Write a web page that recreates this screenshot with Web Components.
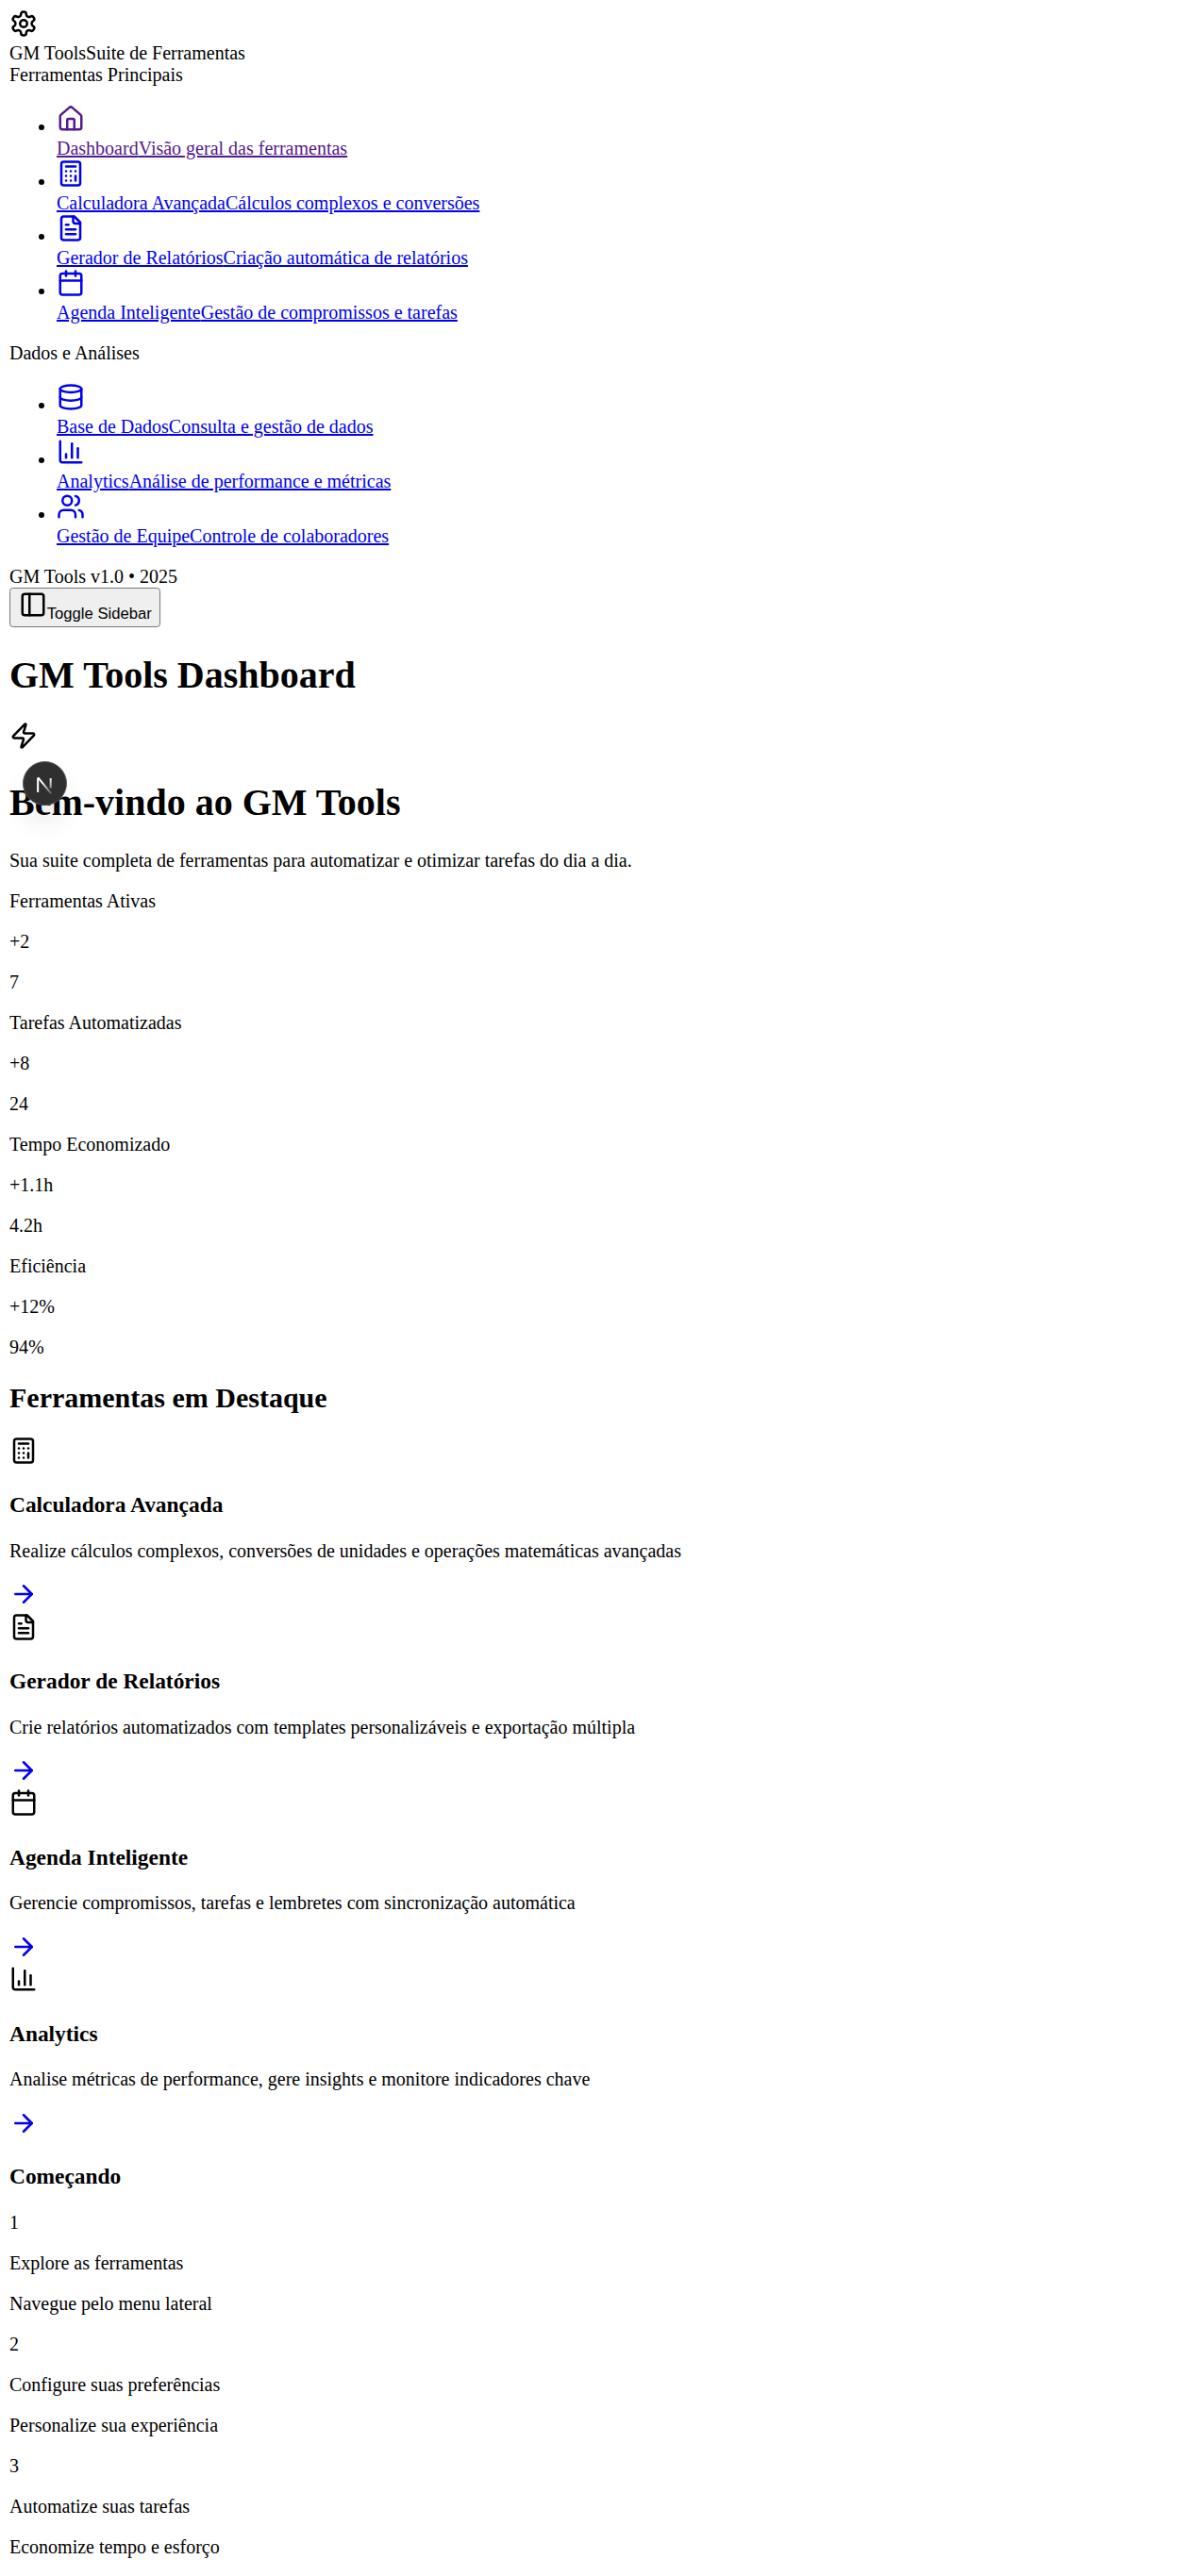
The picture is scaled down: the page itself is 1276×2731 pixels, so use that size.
<!DOCTYPE html>
<html lang="pt-BR">
<head>
<meta charset="utf-8">
<title>GM Tools</title>
<style>
  body {
    margin: 10px;
    font-family: "Liberation Serif", "Times New Roman", serif;
    font-size: 20px;
    color: #000;
    background: #fff;
  }
</style>
</head>
<body>
  <gm-sidebar>
    <gm-nav-group label="Ferramentas Principais">
      <gm-nav-item icon="house" current><span slot="title">Dashboard</span><span slot="sub">Visão geral das ferramentas</span></gm-nav-item>
      <gm-nav-item icon="calculator"><span slot="title">Calculadora Avançada</span><span slot="sub">Cálculos complexos e conversões</span></gm-nav-item>
      <gm-nav-item icon="file-text"><span slot="title">Gerador de Relatórios</span><span slot="sub">Criação automática de relatórios</span></gm-nav-item>
      <gm-nav-item icon="calendar"><span slot="title">Agenda Inteligente</span><span slot="sub">Gestão de compromissos e tarefas</span></gm-nav-item>
    </gm-nav-group>
    <gm-nav-group label="Dados e Análises">
      <gm-nav-item icon="database"><span slot="title">Base de Dados</span><span slot="sub">Consulta e gestão de dados</span></gm-nav-item>
      <gm-nav-item icon="chart"><span slot="title">Analytics</span><span slot="sub">Análise de performance e métricas</span></gm-nav-item>
      <gm-nav-item icon="users"><span slot="title">Gestão de Equipe</span><span slot="sub">Controle de colaboradores</span></gm-nav-item>
    </gm-nav-group>
  </gm-sidebar>

  <gm-topbar>GM Tools Dashboard</gm-topbar>

  <gm-dashboard>
    <gm-stat label="Ferramentas Ativas" trend="+2" value="7"></gm-stat>
    <gm-stat label="Tarefas Automatizadas" trend="+8" value="24"></gm-stat>
    <gm-stat label="Tempo Economizado" trend="+1.1h" value="4.2h"></gm-stat>
    <gm-stat label="Eficiência" trend="+12%" value="94%"></gm-stat>

    <gm-tool-card slot="tools" icon="calculator" heading="Calculadora Avançada">Realize cálculos complexos, conversões de unidades e operações matemáticas avançadas</gm-tool-card>
    <gm-tool-card slot="tools" icon="file-text" heading="Gerador de Relatórios">Crie relatórios automatizados com templates personalizáveis e exportação múltipla</gm-tool-card>
    <gm-tool-card slot="tools" icon="calendar" heading="Agenda Inteligente">Gerencie compromissos, tarefas e lembretes com sincronização automática</gm-tool-card>
    <gm-tool-card slot="tools" icon="chart" heading="Analytics">Analise métricas de performance, gere insights e monitore indicadores chave</gm-tool-card>

    <gm-step slot="steps" n="1" heading="Explore as ferramentas">Navegue pelo menu lateral</gm-step>
    <gm-step slot="steps" n="2" heading="Configure suas preferências">Personalize sua experiência</gm-step>
    <gm-step slot="steps" n="3" heading="Automatize suas tarefas">Economize tempo e esforço</gm-step>
  </gm-dashboard>

  <gm-dev-badge></gm-dev-badge>

<script>
// Icon outlines, 24x24 viewBox
const ICONS = {
  settings: '<path d="M12.22 2h-.44a2 2 0 0 0-2 2v.18a2 2 0 0 1-1 1.73l-.43.25a2 2 0 0 1-2 0l-.15-.08a2 2 0 0 0-2.73.73l-.22.38a2 2 0 0 0 .73 2.73l.15.1a2 2 0 0 1 1 1.72v.51a2 2 0 0 1-1 1.74l-.15.09a2 2 0 0 0-.73 2.73l.22.38a2 2 0 0 0 2.73.73l.15-.08a2 2 0 0 1 2 0l.43.25a2 2 0 0 1 1 1.73V20a2 2 0 0 0 2 2h.44a2 2 0 0 0 2-2v-.18a2 2 0 0 1 1-1.73l.43-.25a2 2 0 0 1 2 0l.15.08a2 2 0 0 0 2.73-.73l.22-.39a2 2 0 0 0-.73-2.73l-.15-.08a2 2 0 0 1-1-1.74v-.5a2 2 0 0 1 1-1.74l.15-.09a2 2 0 0 0 .73-2.73l-.22-.38a2 2 0 0 0-2.73-.73l-.15.08a2 2 0 0 1-2 0l-.43-.25a2 2 0 0 1-1-1.73V4a2 2 0 0 0-2-2z"/><circle cx="12" cy="12" r="3"/>',
  house: '<path d="M15 21v-8a1 1 0 0 0-1-1h-4a1 1 0 0 0-1 1v8"/><path d="M3 10a2 2 0 0 1 .709-1.528l7-5.999a2 2 0 0 1 2.582 0l7 5.999A2 2 0 0 1 21 10v9a2 2 0 0 1-2 2H5a2 2 0 0 1-2-2z"/>',
  calculator: '<rect width="16" height="20" x="4" y="2" rx="2"/><line x1="8" x2="16" y1="6" y2="6"/><line x1="16" x2="16" y1="14" y2="18"/><path d="M16 10h.01"/><path d="M12 10h.01"/><path d="M8 10h.01"/><path d="M12 14h.01"/><path d="M8 14h.01"/><path d="M12 18h.01"/><path d="M8 18h.01"/>',
  'file-text': '<path d="M15 2H6a2 2 0 0 0-2 2v16a2 2 0 0 0 2 2h12a2 2 0 0 0 2-2V7Z"/><path d="M14 2v4a2 2 0 0 0 2 2h4"/><path d="M10 9H8"/><path d="M16 13H8"/><path d="M16 17H8"/>',
  calendar: '<path d="M8 2v4"/><path d="M16 2v4"/><rect width="18" height="18" x="3" y="4" rx="2"/><path d="M3 10h18"/>',
  database: '<ellipse cx="12" cy="5" rx="9" ry="3"/><path d="M3 5V19A9 3 0 0 0 21 19V5"/><path d="M3 12A9 3 0 0 0 21 12"/>',
  chart: '<path d="M3 3v16a2 2 0 0 0 2 2h16"/><path d="M18 17V9"/><path d="M13 17V5"/><path d="M8 17v-3"/>',
  users: '<path d="M16 21v-2a4 4 0 0 0-4-4H6a4 4 0 0 0-4 4v2"/><circle cx="9" cy="7" r="4"/><path d="M22 21v-2a4 4 0 0 0-3-3.87"/><path d="M16 3.13a4 4 0 0 1 0 7.75"/>',
  'panel-left': '<rect width="18" height="18" x="3" y="3" rx="2"/><path d="M9 3v18"/>',
  zap: '<path d="M4 14a1 1 0 0 1-.78-1.63l9.9-10.2a.5.5 0 0 1 .86.46l-1.92 6.02A1 1 0 0 0 13 10h7a1 1 0 0 1 .78 1.63l-9.9 10.2a.5.5 0 0 1-.86-.46l1.92-6.02A1 1 0 0 0 11 14z"/>',
  'arrow-right': '<path d="M5 12h14"/><path d="m12 5 7 7-7 7"/>'
};

function icon(name) {
  return `<svg xmlns="http://www.w3.org/2000/svg" width="30" height="30" viewBox="0 0 24 24" fill="none" stroke="currentColor" stroke-width="2" stroke-linecap="round" stroke-linejoin="round">${ICONS[name]}</svg>`;
}

// Small helper so each element stays a class with its own shadow root
class GmElement extends HTMLElement {
  constructor() {
    super();
    this.attachShadow({ mode: 'open' });
  }

  connectedCallback() {
    this.shadowRoot.innerHTML = this.render();
  }
}

class GmSidebar extends GmElement {
  render() {
    return `
      <style>:host { display: block; }</style>
      <div>${icon('settings')}</div>
      <div><span>GM Tools</span><span>Suite de Ferramentas</span></div>
      <slot></slot>
      <div>GM Tools v1.0 • 2025</div>`;
  }
}

class GmNavGroup extends GmElement {
  render() {
    return `
      <style>
        :host { display: block; }
        ul { margin: 20px 0; padding-left: 50px; }
      </style>
      <div>${this.getAttribute('label')}</div>
      <ul><slot></slot></ul>`;
  }
}

class GmNavItem extends GmElement {
  render() {
    const color = this.hasAttribute('current') ? '#551a8b' : '#0000ee';
    return `
      <style>
        :host { display: list-item; list-style: disc; }
        a { color: ${color}; text-decoration: underline; }
      </style>
      <a href="#"><div>${icon(this.getAttribute('icon'))}</div><div><slot name="title"></slot><slot name="sub"></slot></div></a>`;
  }
}

class GmTopbar extends GmElement {
  render() {
    return `
      <style>
        :host { display: block; }
        button {
          display: inline-block;
          margin: 0;
          padding: 1.5px 8px 3.5px 8.75px;
          border: 1.25px solid #767676;
          border-radius: 3.75px;
          background: #efefef;
          color: #000;
          font: 16.67px "Liberation Sans", Arial, sans-serif;
        }
        h1 { font-size: 40px; margin: 26.8px 0; }
      </style>
      <button type="button">${icon('panel-left')}<span>Toggle Sidebar</span></button>
      <h1><slot></slot></h1>`;
  }
}

class GmDashboard extends GmElement {
  render() {
    return `
      <style>
        :host { display: block; }
        .lead svg { margin: -1px 0 1px; }
        h1 { font-size: 40px; margin: 26.8px 0; }
        h2 { font-size: 30px; margin: 24.9px 0; }
        h3 { font-size: 23.4px; margin: 23.4px 0; }
        p { margin: 20px 0; }
      </style>
      <div class="lead">${icon('zap')}</div>
      <h1>Bem-vindo ao GM Tools</h1>
      <p>Sua suite completa de ferramentas para automatizar e otimizar tarefas do dia a dia.</p>
      <slot></slot>
      <h2>Ferramentas em Destaque</h2>
      <slot name="tools"></slot>
      <h3>Começando</h3>
      <slot name="steps"></slot>`;
  }
}

class GmStat extends GmElement {
  render() {
    return `
      <style>
        :host { display: block; }
        p { margin: 20px 0; }
      </style>
      <p>${this.getAttribute('label')}</p>
      <p>${this.getAttribute('trend')}</p>
      <p>${this.getAttribute('value')}</p>`;
  }
}

class GmToolCard extends GmElement {
  render() {
    return `
      <style>
        :host { display: block; }
        .top svg { margin: -1.25px 0 1.25px; }
        .go svg { margin: -0.5px 0 0.5px; }
        h3 { font-size: 23.4px; margin: 23.4px 0; }
        p { margin: 20px 0; }
        a { color: #0000ee; }
      </style>
      <div class="top">${icon(this.getAttribute('icon'))}</div>
      <h3>${this.getAttribute('heading')}</h3>
      <p><slot></slot></p>
      <a href="#"><div class="go">${icon('arrow-right')}</div></a>`;
  }
}

class GmStep extends GmElement {
  render() {
    return `
      <style>
        :host { display: block; }
        p { margin: 20px 0; }
      </style>
      <p>${this.getAttribute('n')}</p>
      <p>${this.getAttribute('heading')}</p>
      <p><slot></slot></p>`;
  }
}

// Floating dev tools badge, sits over the page
class GmDevBadge extends GmElement {
  render() {
    return `
      <style>
        :host {
          position: fixed;
          left: 24px;
          top: 807px;
          width: 47px;
          height: 47px;
          box-sizing: border-box;
          padding-top: 3px;
          border: 1.25px solid #5a5a5a;
          border-radius: 50%;
          background: #2f2f2f;
          box-shadow: 0 20px 32px -8px rgba(0, 0, 0, 0.16);
          display: flex;
          align-items: center;
          justify-content: center;
        }
      </style>
      <svg width="23" height="23" viewBox="0 0 20 20" fill="none">
        <defs>
          <linearGradient id="fade" x1="10" y1="6" x2="18" y2="20" gradientUnits="userSpaceOnUse">
            <stop offset="0" stop-color="#fff"/>
            <stop offset="1" stop-color="#fff" stop-opacity="0"/>
          </linearGradient>
        </defs>
        <path d="M3.6 16.4V3.6" stroke="#fff" stroke-width="1.8"/>
        <path d="M3.2 3.4h1L16 18" stroke="url(#fade)" stroke-width="1.8"/>
        <path d="M15.4 3.6v9" stroke="url(#fade)" stroke-width="1.8"/>
      </svg>`;
  }
}

customElements.define('gm-sidebar', GmSidebar);
customElements.define('gm-nav-group', GmNavGroup);
customElements.define('gm-nav-item', GmNavItem);
customElements.define('gm-topbar', GmTopbar);
customElements.define('gm-dashboard', GmDashboard);
customElements.define('gm-stat', GmStat);
customElements.define('gm-tool-card', GmToolCard);
customElements.define('gm-step', GmStep);
customElements.define('gm-dev-badge', GmDevBadge);
</script>
</body>
</html>
